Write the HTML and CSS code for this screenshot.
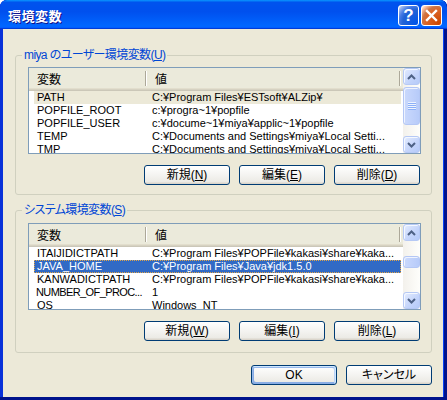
FILE: index.html
```html
<!DOCTYPE html>
<html lang="ja">
<head>
<meta charset="utf-8">
<title>環境変数</title>
<link rel="stylesheet" href="styles.css">
</head>
<body>
<div class="window">
  <div class="titlebar">
    <span class="title">環境変数</span>
    <div class="tb-buttons">
      <span class="tb-btn help">?</span>
      <span class="tb-btn close"><svg width="13" height="13" viewBox="0 0 13 13"><path d="M2 2 L11 11 M11 2 L2 11" stroke="#fff" stroke-width="2.4" stroke-linecap="square"/></svg></span>
    </div>
  </div>
  <div class="client">
    <fieldset class="group g1">
      <legend>miya のユーザー環境変数(<u>U</u>)</legend>
      <div class="listview">
        <div class="lv-main">
          <div class="lv-header">
            <div class="hcol c1">変数</div>
            <div class="hsep"></div>
            <div class="hcol c2">値</div>
            <div class="hsep"></div>
            <div class="hend"></div>
          </div>
          <div class="lv-rows">
            <div class="row inactive"><span class="c1">PATH</span><span class="c2">C:¥Program Files¥ESTsoft¥ALZip¥</span></div>
            <div class="row"><span class="c1">POPFILE_ROOT</span><span class="c2">c:¥progra~1¥popfile</span></div>
            <div class="row"><span class="c1">POPFILE_USER</span><span class="c2">c:¥docume~1¥miya¥applic~1¥popfile</span></div>
            <div class="row"><span class="c1">TEMP</span><span class="c2">C:¥Documents and Settings¥miya¥Local Setti...</span></div>
            <div class="row"><span class="c1">TMP</span><span class="c2">C:¥Documents and Settings¥miya¥Local Setti...</span></div>
          </div>
        </div>
        <div class="scrollbar">
          <div class="sb-btn"><svg width="9" height="6" viewBox="0 0 9 6"><path d="M1 5 L4.5 1.5 L8 5" fill="none" stroke="#4D6185" stroke-width="2"/></svg></div>
          <div class="sb-track"><div class="sb-thumb t1"><div class="grip"></div></div></div>
          <div class="sb-btn"><svg width="9" height="6" viewBox="0 0 9 6"><path d="M1 1 L4.5 4.5 L8 1" fill="none" stroke="#4D6185" stroke-width="2"/></svg></div>
        </div>
      </div>
      <div class="btn-row">
        <button class="btn">新規(<u>N</u>)</button>
        <button class="btn">編集(<u>E</u>)</button>
        <button class="btn">削除(<u>D</u>)</button>
      </div>
    </fieldset>

    <fieldset class="group g2">
      <legend>システム環境変数(<u>S</u>)</legend>
      <div class="listview">
        <div class="lv-main">
          <div class="lv-header">
            <div class="hcol c1">変数</div>
            <div class="hsep"></div>
            <div class="hcol c2">値</div>
            <div class="hsep"></div>
            <div class="hend"></div>
          </div>
          <div class="lv-rows">
            <div class="row"><span class="c1">ITAIJIDICTPATH</span><span class="c2">C:¥Program Files¥POPFile¥kakasi¥share¥kaka...</span></div>
            <div class="row sel"><span class="c1">JAVA_HOME</span><span class="c2">C:¥Program Files¥Java¥jdk1.5.0</span></div>
            <div class="row"><span class="c1">KANWADICTPATH</span><span class="c2">C:¥Program Files¥POPFile¥kakasi¥share¥kaka...</span></div>
            <div class="row"><span class="c1 tight">NUMBER_OF_PROC...</span><span class="c2">1</span></div>
            <div class="row"><span class="c1">OS</span><span class="c2">Windows_NT</span></div>
          </div>
        </div>
        <div class="scrollbar">
          <div class="sb-btn"><svg width="9" height="6" viewBox="0 0 9 6"><path d="M1 5 L4.5 1.5 L8 5" fill="none" stroke="#4D6185" stroke-width="2"/></svg></div>
          <div class="sb-track"><div class="sb-thumb t2"></div></div>
          <div class="sb-btn"><svg width="9" height="6" viewBox="0 0 9 6"><path d="M1 1 L4.5 4.5 L8 1" fill="none" stroke="#4D6185" stroke-width="2"/></svg></div>
        </div>
      </div>
      <div class="btn-row">
        <button class="btn">新規(<u>W</u>)</button>
        <button class="btn">編集(<u>I</u>)</button>
        <button class="btn">削除(<u>L</u>)</button>
      </div>
    </fieldset>

    <div class="dialog-buttons">
      <button class="btn default">OK</button>
      <button class="btn">キャンセル</button>
    </div>
  </div>
</div>
</body>
</html>
```

FILE: styles.css
```css
* { box-sizing: border-box; }

body {
  margin: 0;
  background: #ffffff;
  font-family: "Liberation Sans", "Noto Sans CJK JP", sans-serif;
  font-size: 12px;
}

.window {
  width: 447px;
  height: 400px;
  display: flex;
  flex-direction: column;
  background: #0841F5;
  border-radius: 7px 7px 0 0;
  overflow: hidden;
  box-shadow: inset -3px -3px #00138c, inset 3px 3px #0831d9, inset -2px -2px #001ea0, inset 2px 2px #166aee, inset -1px -1px #0841f5, inset 1px 1px #0841f5;
}

.titlebar {
  height: 29px;
  flex: none;
  display: flex;
  align-items: flex-start;
  padding: 5px 5px 0 8px;
  background: linear-gradient(180deg, #0997ff, #0053ee 8%, #0050ee 40%, #0066ff 88%, #0066ff 93%, #005bff 95%, #003dd7 96%, #003dd7);
  border-radius: 7px 7px 0 0;
}

.title {
  flex: 1;
  color: #ffffff;
  font-family: "Noto Sans CJK JP", sans-serif;
  font-weight: bold;
  font-size: 13px;
  line-height: 21px;
  letter-spacing: 0.5px;
  text-shadow: 1px 1px #0f1089;
}

.tb-buttons {
  display: flex;
  gap: 2px;
}

.tb-btn {
  width: 21px;
  height: 21px;
  border: 1px solid #ffffff;
  border-radius: 3px;
  display: flex;
  align-items: center;
  justify-content: center;
  color: #ffffff;
}

.help {
  background: radial-gradient(circle at 90% 90%, #0054e9 0%, #2263d5 55%, #4479e4 70%, #a3bbec 90%, #ffffff 100%);
  font-family: "Liberation Sans", sans-serif;
  font-weight: bold;
  font-size: 17px;
  line-height: 19px;
}

.close {
  background: radial-gradient(circle at 90% 90%, #cc4600 0%, #dc6527 55%, #cd7546 70%, #ffccb2 90%, #ffffff 100%);
}

.client {
  flex: 1;
  margin: 0 4px 3px 3px;
  background: #ECE9D8;
  padding: 19px 11px 0 12px;
  display: flex;
  flex-direction: column;
}

.group {
  margin: 0;
  padding: 5px 10px 9px 12px;
  border: 1px solid #D0D0BF;
  border-radius: 3px;
  min-width: 0;
}

.group legend {
  margin-left: -6px;
  padding: 0 2px;
  color: #0046D5;
  font-family: "Liberation Sans", "Noto Sans CJK JP", sans-serif;
  font-feature-settings: "palt";
  font-size: 12px;
  line-height: 14px;
  letter-spacing: -0.6px;
}

.g2 {
  margin-top: 8px;
  padding-top: 6px;
  padding-bottom: 11px;
}

u { text-underline-offset: 1px; }

.listview {
  height: 87px;
  border: 1px solid #7F9DB9;
  background: #ffffff;
  display: flex;
}

.lv-main {
  flex: 1;
  min-width: 0;
  overflow: hidden;
}

.lv-header {
  height: 23px;
  display: flex;
  background: #EBEADB;
  box-shadow: inset 0 -1px #CBC7B8, inset 0 -2px #D6D2C2, inset 0 -3px #E2DECD;
  font-family: "Noto Sans CJK JP", sans-serif;
  font-size: 12px;
  line-height: 21px;
}

.hcol.c1 {
  width: 116px;
  padding-left: 8px;
}

.hcol.c2 {
  flex: 1;
  padding-left: 8px;
}

.hsep {
  width: 2px;
  height: 15px;
  margin-top: 3px;
  border-left: 1px solid #ACA899;
  border-right: 1px solid #ffffff;
}

.hend { width: 2px; }

.lv-rows {
  padding: 0 2px 0 5px;
}

.row {
  display: flex;
  height: 13px;
  line-height: 13px;
  font-family: "Liberation Sans", sans-serif;
  font-size: 11px;
  white-space: nowrap;
  color: #000000;
}

.row .c1 {
  width: 111px;
  flex: none;
  padding-left: 3px;
  overflow: hidden;
}

.row .c1.tight {
  padding-left: 2px;
  letter-spacing: -0.6px;
}

.row .c2 {
  flex: 1;
  min-width: 0;
  padding-left: 7px;
  overflow: hidden;
}

.row.inactive { background: #ECE9D8; }

.row.sel {
  background: #316AC5;
  color: #ffffff;
  outline: 1px dotted #E0A448;
  outline-offset: -1px;
}

.scrollbar {
  width: 17px;
  flex: none;
  display: flex;
  flex-direction: column;
  background: linear-gradient(90deg, #F3F1EC, #FEFEFB);
}

.sb-btn {
  height: 17px;
  flex: none;
  display: flex;
  align-items: center;
  justify-content: center;
  border: 1px solid #B6C9F5;
  border-radius: 3px;
  background: linear-gradient(135deg, #E4ECFE, #C3D4FB 60%, #B5CAF8);
  box-shadow: inset 1px 1px #F4F8FF;
}

.sb-track {
  flex: 1;
  display: flex;
  flex-direction: column;
}

.sb-thumb {
  border: 1px solid #B4C7F5;
  border-radius: 3px;
  background: linear-gradient(90deg, #CAD9FC, #C1D2FB 50%, #B7CBF9);
  box-shadow: inset 1px 1px #EEF3FF;
  display: flex;
  align-items: center;
  justify-content: center;
}

.t1 { margin-top: 2px; height: 38px; }
.t2 { margin-top: 15px; height: 12px; }

.grip {
  width: 8px;
  height: 8px;
  background: repeating-linear-gradient(180deg, #EEF4FE 0 1px, #8CB0F8 1px 2px);
}

.btn-row {
  display: flex;
  justify-content: flex-end;
  gap: 9px;
  margin-top: 11px;
  padding-right: 1px;
}

.btn {
  width: 86px;
  height: 20px;
  padding: 0;
  border: 1px solid #003C74;
  border-radius: 3px;
  background: linear-gradient(180deg, #ffffff, #ECEBE6 86%, #D6D0C5);
  color: #000000;
  font-family: "Liberation Sans", "Noto Sans CJK JP", sans-serif;
  font-feature-settings: "palt";
  font-size: 12px;
  line-height: 18px;
}

.btn.default {
  box-shadow: inset -1px 1px #cee7ff, inset 1px 2px #98b8ea, inset -2px 2px #bcd4f6, inset 1px -1px #89ade4, inset 2px -2px #89ade4;
}

.dialog-buttons {
  display: flex;
  justify-content: flex-end;
  gap: 9px;
  margin-top: 12px;
}
```
